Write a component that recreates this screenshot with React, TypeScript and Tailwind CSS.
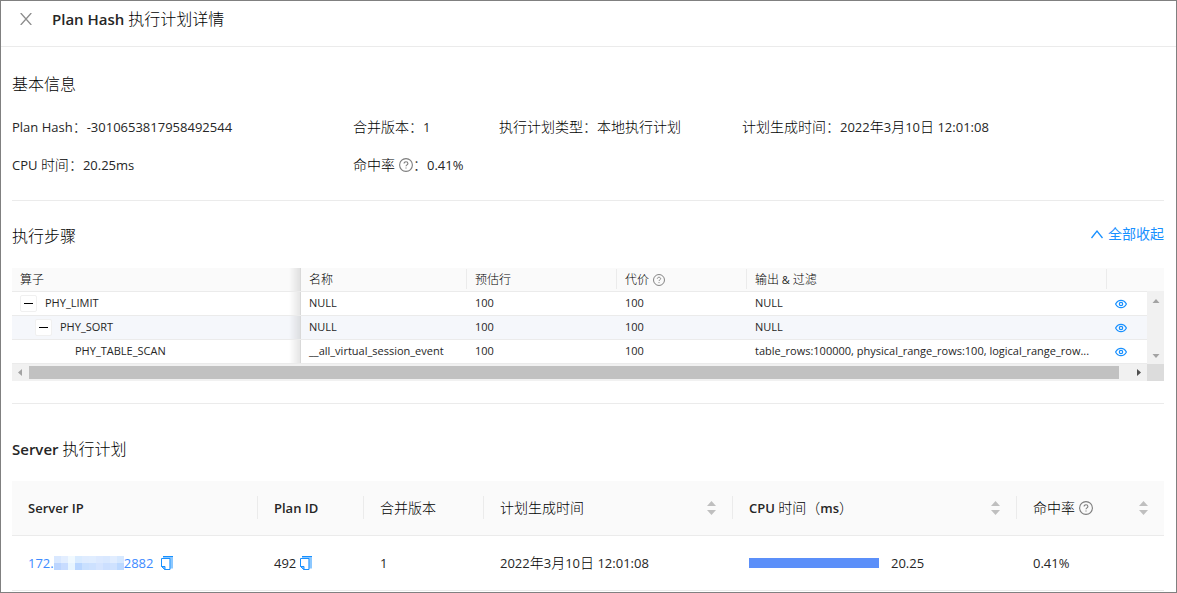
import type { ReactNode } from "react";
import clsx from "clsx";

// Latin glyphs run wide next to the Chinese ones, so they are set one size down.
const LATIN = {
  xs: "text-[11px] font-normal",
  sm: "text-[13px] font-normal",
  smBold: "text-[13px] font-semibold",
  baseBold: "text-[15px] font-semibold",
};

function Mixed({ children, size = "sm" }: { children: string; size?: keyof typeof LATIN }) {
  const parts = children.split(/([\u3000-\u9fff\uff00-\uffef]+)/).filter(Boolean);
  return (
    <>
      {parts.map((part, i) =>
        /[\u3000-\u9fff\uff00-\uffef]/.test(part) ? (
          <span key={i} className="text-black">
            {part}
          </span>
        ) : (
          <span key={i} className={LATIN[size]}>
            {part}
          </span>
        )
      )}
    </>
  );
}

const STEPS = [
  { op: "PHY_LIMIT", level: 0, leaf: false, name: "NULL", output: "NULL" },
  { op: "PHY_SORT", level: 1, leaf: false, name: "NULL", output: "NULL" },
  {
    op: "PHY_TABLE_SCAN",
    level: 2,
    leaf: true,
    name: "__all_virtual_session_event",
    output: "table_rows:100000, physical_range_rows:100, logical_range_row...",
  },
];

const INDENT = ["pl-2", "pl-[23px]", "pl-[63px]"];

const MOSAIC = [
  "bg-[#d9e8ff]", "bg-[#e3eeff]", "bg-[#f0f9ff]", "bg-[#d9ebff]", "bg-[#dfecff]",
  "bg-[#e0edff]", "bg-[#dce9ff]", "bg-[#d9e8ff]", "bg-[#e1edff]", "bg-[#d6e8ff]",
  "bg-[#bcd5ff]", "bg-[#c8dcff]", "bg-[#e8f5ff]", "bg-[#b9d6ff]", "bg-[#c9e0ff]",
  "bg-[#cde1ff]", "bg-[#d5e4ff]", "bg-[#ccdfff]", "bg-[#cfe2ff]", "bg-[#bdd9ff]",
];

function HelpIcon({ className }: { className: string }) {
  return (
    <svg viewBox="0 0 14 14" fill="none" stroke="#7d7d7d" strokeWidth="1.100" className={clsx("inline-block", className)}>
      <circle cx="7" cy="7" r="6.4" />
      <path d="M5.1 5.5C5.1 4.4 5.9 3.8 7 3.8s1.9.7 1.9 1.7c0 1.3-1.9 1.4-1.9 2.7" />
      <path d="M7 9.5v1.1" />
    </svg>
  );
}

function EyeIcon() {
  return (
    <svg viewBox="0 0 12 12" fill="none" stroke="#1890ff" strokeWidth="1.200" className="block h-3 w-3">
      <path d="M.6 6C1.9 3.4 3.7 2.3 6 2.3S10.1 3.4 11.4 6C10.1 8.6 8.3 9.7 6 9.7S1.9 8.6.6 6Z" />
      <circle cx="6" cy="6" r="1.7" />
    </svg>
  );
}

function CopyButton({ label }: { label: string }) {
  return (
    <button type="button" aria-label={label} className="block">
      <svg viewBox="0 0 12 14" className="block h-[14px] w-3">
        <path d="M2 0h10v12.500h-3V2H2Z" fill="#8cc8ff" />
        <path d="M2 .5h10" stroke="#1890ff" />
        <path d="M.5 2.5h8.500v11H4l-3.500-3Z" fill="#fff" stroke="#1890ff" />
        <path d="M9 3v10" stroke="#69b7ff" />
        <path d="M.5 10.500H4v3Z" fill="#8cc8ff" stroke="#1890ff" />
      </svg>
    </button>
  );
}

function Sorter() {
  return (
    <button type="button" aria-label="排序" className="block">
      <svg viewBox="0 0 9 14" fill="#bfbfbf" className="block h-[14px] w-[9px]">
        <path d="M4.5 0 9 5H0Z" />
        <path d="M4.5 14 9 9H0Z" />
      </svg>
    </button>
  );
}

function Arrow({ d, fill = "#a3a3a3" }: { d: string; fill?: string }) {
  return (
    <svg viewBox="0 0 17 17" fill={fill} className="block h-[17px] w-[17px] shrink-0">
      <path d={d} />
    </svg>
  );
}

// Shadow that the fixed first column casts at its right edge
function FixedEdge() {
  return (
    <span className="absolute inset-y-0 right-0 w-3 border-r border-[#d9d9d9] bg-gradient-to-r from-transparent to-black/10" />
  );
}

function Info({ label, value, help }: { label: string; value: string; help?: boolean }) {
  return (
    <div className="flex items-center whitespace-nowrap leading-[22px]">
      <dt className="flex items-center">
        <span>
          <Mixed>{label}</Mixed>
        </span>
        {help && <HelpIcon className="ml-1 h-[14px] w-[14px]" />}
        ：
      </dt>
      <dd>
        <Mixed>{value}</Mixed>
      </dd>
    </div>
  );
}

function StepHead({ children, last }: { children?: ReactNode; last?: boolean }) {
  return (
    <th className="p-0 text-left font-light">
      <div className={clsx("flex h-5 items-center px-2 pt-px", !last && "border-r border-[#ebebeb]")}>{children}</div>
    </th>
  );
}

function StepsTable() {
  return (
    <div className="text-xs">
      <div className="flex">
        <div className="min-w-0 flex-1">
          <table className="w-full table-fixed border-collapse">
            <colgroup>
              <col />
              <col className="w-[166px]" />
              <col className="w-[150px]" />
              <col className="w-[130px]" />
              <col className="w-[360px]" />
              <col className="w-10" />
            </colgroup>
            <thead>
              <tr className="h-[23px] border-b border-[#ebebeb] bg-[#fafafa]">
                <th className="relative px-2 pt-px pb-0 text-left font-light">
                  <Mixed>算子</Mixed>
                  <FixedEdge />
                </th>
                <StepHead>
                  <Mixed>名称</Mixed>
                </StepHead>
                <StepHead>
                  <Mixed>预估行</Mixed>
                </StepHead>
                <StepHead>
                  <Mixed>代价</Mixed>
                  <HelpIcon className="ml-1 h-3 w-3" />
                </StepHead>
                <StepHead>
                  <span>
                    <Mixed size="xs">输出 & 过滤</Mixed>
                  </span>
                </StepHead>
                <StepHead last />
              </tr>
            </thead>
            <tbody className="text-[11px] font-normal">
              {STEPS.map((step, i) => (
                <tr key={step.op} className={clsx("h-6 border-b border-[#ebebeb]", i === 1 && "bg-[#f5f7fb]")}>
                  <td className={clsx("relative pt-px pb-0", INDENT[step.level])}>
                    <div className="flex items-center gap-2">
                      {!step.leaf && (
                        <button
                          type="button"
                          aria-label={"收起 " + step.op}
                          className="flex h-[17px] w-[17px] items-center justify-center rounded-xs border border-[#f0f0f0] bg-white"
                        >
                          <span className="h-px w-[9px] bg-black" />
                        </button>
                      )}
                      {step.op}
                    </div>
                    <FixedEdge />
                  </td>
                  <td className="px-2 pt-px pb-0">{step.name}</td>
                  <td className="px-2 pt-px pb-0">100</td>
                  <td className="px-2 pt-px pb-0">100</td>
                  <td className="truncate px-2 pt-px pb-0">{step.output}</td>
                  <td className="px-2 pt-px pb-0">
                    <button type="button" aria-label={"查看 " + step.op} className="block">
                      <EyeIcon />
                    </button>
                  </td>
                </tr>
              ))}
            </tbody>
          </table>
        </div>
        <div className="flex w-[17px] flex-col">
          <div className="h-[23px] bg-[#fafafa]" />
          <div className="flex flex-1 flex-col justify-between bg-[#f1f1f1]">
            <Arrow d="M9 8 12.500 12h-7Z" />
            <Arrow d="M9 11 12.500 7h-7Z" />
          </div>
        </div>
      </div>
      <div className="flex h-[17px]">
        <div className="flex flex-1 items-center bg-[#f1f1f1]">
          <Arrow d="M6 8.500 10 5v7Z" />
          <div className="h-[13px] flex-1 bg-[#c1c1c1]" />
          <div className="w-[11px]" />
          <Arrow d="M11 8.500 7 5v7Z" fill="#505050" />
        </div>
        <div className="w-[17px] bg-[#dcdcdc]" />
      </div>
    </div>
  );
}

function ServerHead({ title, help, sort, last }: { title: string; help?: boolean; sort?: boolean; last?: boolean }) {
  return (
    <th className="p-0 text-left font-light">
      <div className={clsx("flex h-[23px] items-center px-4", !last && "border-r border-[#ebebeb]")}>
        <span className="whitespace-nowrap">
          <Mixed size="smBold">{title}</Mixed>
        </span>
        {help && <HelpIcon className="ml-1 h-[14px] w-[14px]" />}
        {sort && (
          <span className="ml-auto">
            <Sorter />
          </span>
        )}
      </div>
    </th>
  );
}

function ServerTable() {
  return (
    <table className="w-full table-fixed border-collapse">
      <colgroup>
        <col className="w-[246px]" />
        <col className="w-[106px]" />
        <col className="w-[120px]" />
        <col className="w-[249px]" />
        <col />
        <col className="w-[147px]" />
      </colgroup>
      <thead>
        <tr className="h-[55px] border-b border-[#ebebeb] bg-[#fafafa]">
          <ServerHead title="Server IP" />
          <ServerHead title="Plan ID" />
          <ServerHead title="合并版本" />
          <ServerHead title="计划生成时间" sort />
          <ServerHead title="CPU 时间（ms）" sort />
          <ServerHead title="命中率" help sort last />
        </tr>
      </thead>
      <tbody>
        <tr className="h-[55px] border-b border-[#ebebeb]">
          <td className="px-4 py-0">
            <div className="flex items-center gap-2">
              <a href="#server" className="flex items-center text-[13px] font-normal text-[#3d8bff]">
                172.
                <span className="grid grid-cols-10">
                  {MOSAIC.map((color, i) => (
                    <span key={i} className={clsx("h-[7px] w-[7px]", color)} />
                  ))}
                </span>
                2882
              </a>
              <CopyButton label="复制 Server IP" />
            </div>
          </td>
          <td className="px-4 py-0">
            <div className="flex items-center gap-1 text-[13px] font-normal">
              492
              <CopyButton label="复制 Plan ID" />
            </div>
          </td>
          <td className="px-4 py-0 text-[13px] font-normal">1</td>
          <td className="px-4 py-0">
            <Mixed>2022年3月10日 12:01:08</Mixed>
          </td>
          <td className="px-4 py-0">
            <div className="flex items-center gap-3 text-[13px] font-normal">
              <span className="h-[10px] w-[130px] bg-[#5b8ff9]" />
              20.25
            </div>
          </td>
          <td className="px-4 py-0 text-[13px] font-normal">0.41%</td>
        </tr>
      </tbody>
    </table>
  );
}

export default function App() {
  return (
    <div className="min-h-screen border border-[#808080] bg-white font-['Open_Sans','Noto_Sans_CJK_SC',sans-serif] text-sm font-light text-[#262626]">
      <header className="flex items-center gap-5 border-b border-[#ebebeb] px-[19px] pt-[7px] pb-4">
        <button type="button" aria-label="关闭" className="block">
          <svg viewBox="0 0 12 12" fill="none" stroke="#8c8c8c" strokeWidth="1.300" className="block h-3 w-3">
            <path d="M.7 0l10.600 12M11.300 0 .7 12" />
          </svg>
        </button>
        <h1 className="text-base leading-[22px] font-light">
          <Mixed size="baseBold">Plan Hash 执行计划详情</Mixed>
        </h1>
      </header>

      <main className="pr-3 pl-[11px]">
        <section className="border-b border-[#ebebeb] pt-[25px] pb-6">
          <h2 className="mb-5 text-base leading-6 font-light">
            <Mixed>基本信息</Mixed>
          </h2>
          <dl className="grid grid-cols-[341fr_146fr_243fr_422fr] gap-y-4">
            <Info label="Plan Hash" value="-3010653817958492544" />
            <Info label="合并版本" value="1" />
            <Info label="执行计划类型" value="本地执行计划" />
            <Info label="计划生成时间" value="2022年3月10日 12:01:08" />
            <Info label="CPU 时间" value="20.25ms" />
            <Info label="命中率" value="0.41%" help />
          </dl>
        </section>

        <section className="border-b border-[#ebebeb] pt-[23px] pb-[22px]">
          <div className="mb-5 flex items-start justify-between">
            <h2 className="text-base leading-6 font-light">
              <Mixed>执行步骤</Mixed>
            </h2>
            <button type="button" className="flex items-center gap-1 leading-5 font-normal text-[#1890ff]">
              <svg viewBox="0 0 14 14" fill="none" stroke="currentColor" strokeWidth="1.300" className="h-[14px] w-[14px]">
                <path d="M1.500 11 7 4l5.500 7" />
              </svg>
              全部收起
            </button>
          </div>
          <StepsTable />
        </section>

        <section className="pt-[33px]">
          <h2 className="mb-5 text-base leading-6 font-light">
            <Mixed size="baseBold">Server 执行计划</Mixed>
          </h2>
          <ServerTable />
        </section>
      </main>
    </div>
  );
}
